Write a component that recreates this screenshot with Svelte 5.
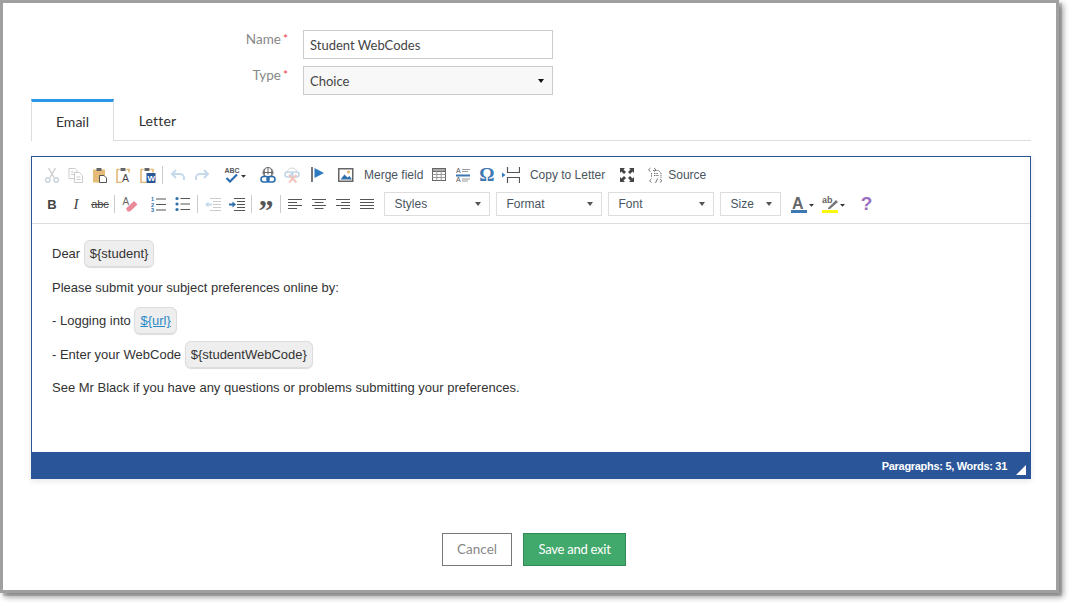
<script lang="ts">
  const combos = [
    { label: 'Styles', cls: 'wide' },
    { label: 'Format', cls: 'wide' },
    { label: 'Font', cls: 'wide' },
    { label: 'Size', cls: 'small' },
  ];
</script>

<div class="page">
<div class="frame">
  <div class="form">
    <div class="row">
      <span class="label">Name<em>*</em></span>
      <input class="field" value="Student WebCodes" />
    </div>
    <div class="row">
      <span class="label">Type<em>*</em></span>
      <div class="field select">Choice<i class="caret dark"></i></div>
    </div>
  </div>

  <div class="tabs">
    <div class="tab active">Email</div>
    <div class="tab">Letter</div>
  </div>

  <div class="editor">
    <div class="toolbar">
      <div class="tools">
        <span class="t"><svg viewBox="0 0 16 16" fill="none" stroke="#c9d3da" stroke-width="1.4"><path d="M4.5 1l5.5 9.5M11.5 1L6 10.5" stroke="#ccc"/><circle cx="3.8" cy="13" r="2.3"/><circle cx="12.2" cy="13" r="2.3"/></svg></span>
        <span class="t"><svg viewBox="0 0 16 16" fill="#fff" stroke="#ccc"><path d="M1 1.500h6l2 2v8H1z"/><path d="M6.500 5.500h5l3 3v7h-8z"/><path d="M3 5h3M3 7.500h3M8.500 10h4M8.500 12.500h4"/></svg></span>
        <span class="t"><svg viewBox="0 0 16 16"><rect x="1" y="2.500" width="12" height="13" fill="#e6bb78"/><rect x="4.500" y="1" width="5" height="3" fill="#666"/><path d="M7.500 8.500h4.500l2.500 2.500v4.500h-7z" fill="#fff" stroke="#555"/></svg></span>
        <span class="t"><svg viewBox="0 0 16 16"><path d="M1 2.500h2.500M10.500 2.500H13v3M1 2.500v13h5" fill="none" stroke="#e2b46d" stroke-width="1.500"/><rect x="4.500" y="1" width="5" height="3" fill="#666"/><text x="6" y="14.500" font-size="10.500" fill="#444" font-family="Liberation Sans">A</text></svg></span>
        <span class="t"><svg viewBox="0 0 16 16"><path d="M1 2.500h2.500M10.500 2.500H13v3M1 2.500v13h5" fill="none" stroke="#e2b46d" stroke-width="1.500"/><rect x="4.500" y="1" width="5" height="3" fill="#666"/><rect x="6.500" y="6" width="9" height="10" fill="#2b5797"/><text x="7.500" y="14" font-size="8" font-weight="700" fill="#fff" font-family="Liberation Sans">W</text></svg></span>
        <b class="sep"></b>
        <span class="t"><svg viewBox="0 0 16 16" fill="none" stroke="#c6d9ea" stroke-width="2"><path d="M6 3L2 7l4 4M2 7h8a4 4 0 0 1 4 4v2"/></svg></span>
        <span class="t"><svg viewBox="0 0 16 16" fill="none" stroke="#c6d9ea" stroke-width="2"><path d="M10 3l4 4-4 4M14 7H6a4 4 0 0 0-4 4v2"/></svg></span>
        <span class="t spell"><svg viewBox="0 0 24 16"><text x="0.500" y="6" font-size="7" font-weight="700" fill="#555" font-family="Liberation Sans">ABC</text><path d="M2.500 11l3.500 3.500 7-7" fill="none" stroke="#2b6cb0" stroke-width="2.200"/><path d="M17 8h5l-2.500 2.800z" fill="#333"/></svg></span>
        <span class="t link"><svg viewBox="0 0 16 16" fill="none" stroke="#666"><circle cx="8" cy="5.500" r="5"/><path d="M3 5.500h10M8 .500v7M5 2c-1 2-1 5 0 7M11 2c1 2 1 5 0 7"/><g stroke="#2b6cb0" stroke-width="1.600"><rect x="1" y="9.500" width="8" height="5.500" rx="2.700" fill="#fff"/><rect x="7" y="9.500" width="8" height="5.500" rx="2.700" fill="none"/></g></svg></span>
        <span class="t"><svg viewBox="0 0 16 16" fill="none" stroke="#d5d5d5"><path d="M3 6a5 5 0 0 1 10 0"/><g stroke="#c3d6e8" stroke-width="1.600"><rect x="1" y="5" width="8" height="5" rx="2.500"/><rect x="7" y="5" width="8" height="5" rx="2.500"/></g><path d="M5 8l7.500 7.500M12.500 8L5 15.500" stroke="#f3c4bb" stroke-width="2"/></svg></span>
        <span class="t flag"><svg viewBox="0 0 14 16"><rect x="0" y="0" width="2" height="15" fill="#777"/><path d="M3.500 1l9.500 5-9.500 5z" fill="#2f7bbf"/></svg></span>
        <span class="t image"><svg viewBox="0 0 16 16"><rect x=".750" y="1.750" width="14" height="12.500" fill="#fff" stroke="#666" stroke-width="1.500"/><circle cx="10.500" cy="5" r="1.500" fill="#e6b066"/><path d="M2.500 12.500l4-5 3 3 2-1.500 2.500 3.500z" fill="#2f6ea8"/></svg></span>
        <span class="txt merge">Merge field</span>
        <span class="t table"><svg viewBox="0 0 14 14" fill="#fff" stroke="#666"><rect x=".500" y=".500" width="13" height="12"/><path d="M.500 .500h13v3H.500z" fill="#aaa"/><path d="M.500 6.500h13M.500 9.500h13M4.800 3v9.500M9.200 3v9.500" stroke="#999"/></svg></span>
        <span class="t atext"><svg viewBox="0 0 16 16"><text x="1" y="6" font-size="7" fill="#555" font-family="Liberation Sans">A</text><text x="1" y="15" font-size="7" fill="#555" font-family="Liberation Sans">A</text><path d="M7 2.500h8M7 4.500h6M7 12h8M7 14h6" stroke="#999"/><rect x="1" y="7.500" width="14" height="2" fill="#3d78b3"/></svg></span>
        <span class="t omega">Ω</span>
        <span class="t brk"><svg viewBox="0 0 18 18" fill="none" stroke="#555" stroke-width="1.200"><path d="M5.500 1v5.500h12v-5.500M5.500 17v-5.500h12V17"/><path d="M0 6.500l3.500 2.500L0 11.500z" fill="#2f7bbf" stroke="none"/></svg></span>
        <span class="txt copy">Copy to Letter</span>
        <span class="t full"><svg viewBox="0 0 16 16" fill="#444"><path d="M1 1h5L4.500 2.500 7 5 5 7 2.500 4.500 1 6zM15 1v5l-1.500-1.500L11 7 9 5l2.500-2.500L10 1zM1 15v-5l1.500 1.500L5 9l2 2-2.500 2.500L6 15zM15 15h-5l1.500-1.500L9 11l2-2 2.500 2.500L15 10z"/></svg></span>
        <span class="t source"><svg viewBox="0 0 16 16" fill="none" stroke="#555" stroke-width=".800"><path d="M5 3.500h5.500l2.500 2.500v5M3.500 6v4.500M6 6.500h4M6 8.500h5" stroke-dasharray="1.500 .700"/><path d="M2.500 1L.5 2.800l2 1.800M6 1l2 1.800L6 4.600M3.500 15.500l-2-1.800 2-1.800M12 11.900l2 1.800-2 1.800M9.500 11.500l-2 4.500"/></svg></span>
        <span class="txt src">Source</span>
      </div>

      <div class="tools second">
        <span class="t"><span class="bold">B</span></span>
        <span class="t"><span class="ital">I</span></span>
        <span class="t"><span class="strike">abc</span></span>
        <b class="sep"></b>
        <span class="t"><svg viewBox="0 0 16 16"><text x="0.500" y="9" font-size="10" fill="#666" font-family="Liberation Sans">A</text><path d="M4 12.500L12 5l3.500 3.500-7.500 7H5.500z" fill="#ea8a99"/></svg></span>
        <span class="t ol"><svg viewBox="0 0 16 16"><g font-size="5.500" font-weight="700" fill="#2f6ea8" font-family="Liberation Sans"><text x="0" y="5">1</text><text x="0" y="10.500">2</text><text x="0" y="15.800">3</text></g><path d="M5 3h10M5 8.500h10M5 14h10" stroke="#555" stroke-width="1.200"/></svg></span>
        <span class="t"><svg viewBox="0 0 16 16"><g fill="#2f6ea8"><circle cx="2" cy="2.500" r="1.600"/><circle cx="2" cy="8" r="1.600"/><circle cx="2" cy="13.500" r="1.600"/></g><path d="M5.500 2.500H15M5.500 8H15M5.500 13.500H15" stroke="#555" stroke-width="1.200"/></svg></span>
        <b class="sep"></b>
        <span class="t"><svg viewBox="0 0 16 16"><path d="M5 2.500h11M8 5.500h8M8 8.500h8M8 11.500h8M5 14.500h11" stroke="#ccc"/><path d="M0 8.500l3.500-3v2h3.500v2H3.500v2z" fill="#c6d9ea"/></svg></span>
        <span class="t"><svg viewBox="0 0 16 16"><path d="M5 2.500h11M8 5.500h8M8 8.500h8M8 11.500h8M5 14.500h11" stroke="#555"/><path d="M7 8.500l-3.500-3v2H0v2h3.500v2z" fill="#2f6ea8"/></svg></span>
        <b class="sep"></b>
        <span class="t quote">”</span>
        <b class="sep"></b>
        <span class="t first"><svg viewBox="0 0 14 14" class="al" stroke="#555"><path d="M0 2.500h14M0 5.500h9M0 8.500h14M0 11.500h9"/></svg></span>
        <span class="t"><svg viewBox="0 0 14 14" class="al" stroke="#555"><path d="M0 2.500h14M2.500 5.500h9M0 8.500h14M2.500 11.500h9"/></svg></span>
        <span class="t"><svg viewBox="0 0 14 14" class="al" stroke="#555"><path d="M0 2.500h14M5 5.500h9M0 8.500h14M5 11.500h9"/></svg></span>
        <span class="t"><svg viewBox="0 0 14 14" class="al" stroke="#555"><path d="M0 2.500h14M0 5.500h14M0 8.500h14M0 11.500h14"/></svg></span>
        <div class="combos">
          {#each combos as combo}
            <div class="combo {combo.cls}">{combo.label}<i class="caret"></i></div>
          {/each}
        </div>
        <span class="t color"><svg viewBox="0 0 24 18"><text x="1" y="14" font-size="16" font-weight="700" fill="#666" font-family="Liberation Sans">A</text><rect x="0" y="15" width="16" height="3" fill="#3d78b3"/><path d="M18 9h5l-2.500 2.800z" fill="#333"/></svg></span>
        <span class="t color"><svg viewBox="0 0 24 18"><text x="0" y="8" font-size="9" font-weight="700" fill="#666" font-family="Liberation Sans">ab</text><path d="M6 13l8-8 2 2-8 7H6z" fill="#777"/><rect x="0" y="15" width="16" height="3" fill="#f8f810"/><path d="M18 9h5l-2.500 2.800z" fill="#333"/></svg></span>
        <span class="t help">?</span>
      </div>
    </div>

    <div class="content">
      <p>Dear <span class="chip">{'${student}'}</span></p>
      <p>Please submit your subject preferences online by:</p>
      <p>- Logging into <span class="chip"><a href="#url">{'${url}'}</a></span></p>
      <p>- Enter your WebCode <span class="chip">{'${studentWebCode}'}</span></p>
      <p>See Mr Black if you have any questions or problems submitting your preferences.</p>
    </div>

    <div class="status">
      <span>Paragraphs: 5, Words: 31</span>
      <i class="grip"></i>
    </div>
  </div>

  <div class="actions">
    <button class="btn cancel">Cancel</button>
    <button class="btn save">Save and exit</button>
  </div>
</div>
</div>

<style>
  :global(body) {
    background: #fff;
    font-family: Lato, sans-serif;
  }

  .page {
    width: 1072px;
    height: 612px;
    overflow: hidden;
  }

  .frame {
    box-sizing: border-box;
    width: 1059px;
    height: 593px;
    padding: 0 25px 0 28px;
    background: #fff;
    border: 3px solid #a0a0a0;
    box-shadow: 3px 3px 0 rgba(0, 0, 0, 0.15), 4px 4px 6px rgba(0, 0, 0, 0.4);
  }

  .form {
    padding-top: 27px;
  }

  .row {
    display: flex;
    gap: 15px;
    margin-bottom: 7px;
  }

  .label {
    width: 257px;
    text-align: right;
    font-size: 13.500px;
    line-height: 17px;
    color: #888;
  }

  .label em {
    margin-left: 2px;
    color: #e44;
    font-style: normal;
    font-size: 12px;
    vertical-align: 1px;
  }

  .field {
    box-sizing: border-box;
    width: 250px;
    height: 29px;
    padding: 0 6px;
    border: 1px solid #ccc;
    font: 13px/27px Lato, sans-serif;
    color: #444;
    background: #fff;
    outline: none;
  }

  .select {
    display: flex;
    align-items: center;
    justify-content: space-between;
    padding: 1px 8px 0 6px;
    background: #f8f8f8;
  }

  .caret {
    width: 0;
    height: 0;
    border: 3.500px solid transparent;
    border-top: 4px solid #555;
    border-bottom: 0;
  }

  .caret.dark {
    border-top-color: #111;
  }

  .tabs {
    display: flex;
    height: 41px;
    margin-top: -3px;
    border-bottom: 1px solid #ddd;
  }

  .tab {
    box-sizing: border-box;
    width: 83px;
    height: 42px;
    text-align: center;
    font-size: 14px;
    color: #333;
  }

  .tab.active {
    background: #fff;
    border: 1px solid #ddd;
    border-top: 3px solid #2a98e8;
    border-bottom: 0;
    padding-top: 10px;
    line-height: 20px;
  }

  .tab + .tab {
    padding: 13px 0 0 4px;
    line-height: 17px;
    letter-spacing: 0.15px;
  }

  .editor {
    box-sizing: border-box;
    display: flex;
    flex-direction: column;
    width: 1000px;
    height: 323px;
    margin-top: 15px;
    border: 1px solid #2a5699;
    border-bottom: 0;
    font-family: "Liberation Sans", Arial, sans-serif;
    box-shadow: 0 2px 6px rgba(0, 0, 0, 0.1);
  }

  .toolbar {
    box-sizing: content-box;
    height: 60px;
    padding: 6px 0 0 8px;
    border-bottom: 1px solid #ddd;
  }

  .tools {
    display: flex;
    align-items: center;
    height: 24px;
  }

  .second {
    margin-top: 5px;
  }

  .t {
    display: flex;
    flex: none;
    align-items: center;
    justify-content: center;
    width: 24px;
    height: 24px;
  }

  .t svg {
    width: 16px;
    height: 16px;
  }

  .t svg.al {
    width: 14px;
    height: 14px;
  }

  .sep {
    flex: none;
    width: 1px;
    height: 18px;
    margin: 0 2.500px 0 2px;
    background: #ccc;
  }

  .txt {
    flex: none;
    font-size: 12px;
    color: #4a5560;
  }

  .spell {
    width: 32px;
    margin-left: 6px;
  }

  .spell svg {
    width: 24px;
  }

  .link {
    margin-left: 4.500px;
  }

  .flag {
    margin-left: 1.500px;
  }

  .flag svg {
    width: 14px;
  }

  .image {
    margin-left: 4.500px;
  }

  .merge {
    margin-left: 6px;
  }

  .table {
    margin-left: 3.500px;
  }

  .table svg {
    width: 14px;
    height: 14px;
  }

  .omega {
    font-size: 19px;
    font-weight: 700;
    color: #3d78b3;
    font-family: "Liberation Serif", serif;
  }

  .brk {
    margin-left: 0.500px;
  }

  .brk svg {
    width: 18px;
    height: 18px;
  }

  .copy {
    margin-left: 6.500px;
  }

  .full {
    margin-left: 9.500px;
  }

  .source {
    margin-left: 5.500px;
  }

  .bold {
    font-size: 13px;
    font-weight: 700;
    color: #444;
  }

  .ital {
    font: italic 15px "Liberation Serif", serif;
    color: #444;
  }

  .strike {
    font-size: 11px;
    color: #444;
    text-decoration: line-through;
  }

  .ol {
    margin-left: 5.500px;
  }

  .quote {
    box-sizing: border-box;
    padding-top: 12px;
    font: 700 30px/1 "Liberation Serif", serif;
    color: #555;
  }

  .first {
    margin-left: -1px;
  }

  .combos {
    display: flex;
    flex: none;
    gap: 6px;
    margin: 0 10px 0 5px;
  }

  .combo {
    display: flex;
    align-items: center;
    justify-content: space-between;
    box-sizing: border-box;
    height: 24px;
    padding: 0 8px 0 10px;
    border: 1px solid #ddd;
    font-size: 12px;
    color: #4a5560;
  }

  .combo.wide {
    width: 106px;
  }

  .combo.small {
    width: 61px;
  }

  .color {
    width: 24px;
  }

  .color + .color {
    margin-left: 7px;
  }

  .color svg {
    width: 24px;
    height: 18px;
  }

  .help {
    margin-left: 9px;
    font-size: 19px;
    font-weight: 700;
    color: #9a6ec0;
  }

  .content {
    flex: 1;
    padding: 20.400px 20px 0;
    font-size: 13px;
    line-height: 20px;
    color: #333;
  }

  .content p {
    margin: 0 0 13.500px;
  }

  .chip {
    padding: 5px;
    background: #eee;
    border: 1px solid #ddd;
    border-radius: 6px;
    box-shadow: 0 1px 1px rgba(0, 0, 0, 0.15);
  }

  .chip a {
    color: #2a8ac8;
  }

  .status {
    display: flex;
    align-items: center;
    justify-content: flex-end;
    height: 27px;
    background: #2a5699;
    color: #fff;
    font-size: 11px;
    font-weight: 700;
    letter-spacing: -0.3px;
  }

  .grip {
    width: 0;
    height: 0;
    margin: 8px 4px 0 9px;
    border-left: 10px solid transparent;
    border-bottom: 10px solid #fff;
  }

  .actions {
    display: flex;
    justify-content: center;
    gap: 11px;
    margin-top: 54px;
    padding-left: 6px;
  }

  .btn {
    box-sizing: border-box;
    height: 33px;
    padding: 0 0 2px;
    font: 13.500px Lato, sans-serif;
  }

  .cancel {
    width: 70px;
    color: #888;
    background: #fff;
    border: 1px solid #777;
  }

  .save {
    width: 103px;
    font-size: 13px;
    letter-spacing: -0.25px;
    color: #fff;
    background: #41a96b;
    border: 1px solid #2f8a55;
  }
</style>
